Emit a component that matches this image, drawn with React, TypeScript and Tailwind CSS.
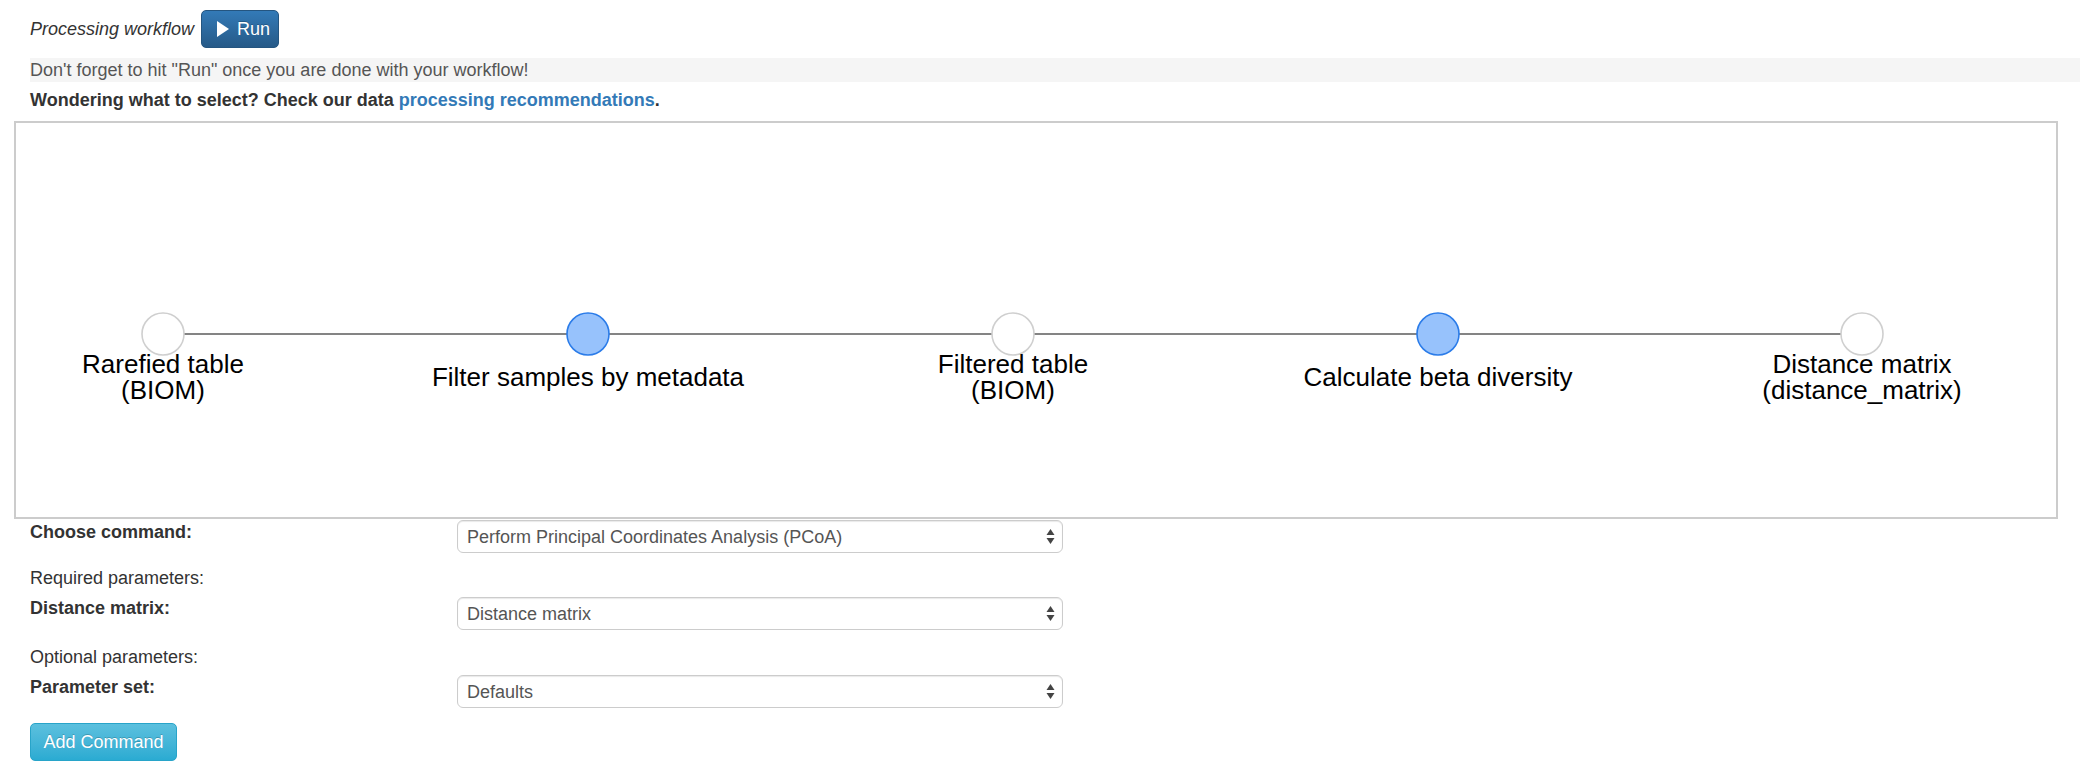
import React from "react";

type Node = {
  cx: number;
  kind: "data" | "fn";
  lines: string[];
  pos: string;
};

const nodes: Node[] = [
  { cx: 147, kind: "data", lines: ["Rarefied table", "(BIOM)"], pos: "left-[147px]" },
  { cx: 572, kind: "fn", lines: ["Filter samples by metadata"], pos: "left-[572px]" },
  { cx: 997, kind: "data", lines: ["Filtered table", "(BIOM)"], pos: "left-[997px]" },
  { cx: 1422, kind: "fn", lines: ["Calculate beta diversity"], pos: "left-[1422px]" },
  { cx: 1846, kind: "data", lines: ["Distance matrix", "(distance_matrix)"], pos: "left-[1846px]" },
];

function SelectBox({ value }: { value: string }) {
  return (
    <div className="flex h-[33px] w-[606px] items-center justify-between rounded-[6px] border border-[#ccc] bg-white pl-[9px] pr-[7px] text-[#555] shadow-[inset_0_1px_1px_rgba(0,0,0,0.09)]">
      <span>{value}</span>
      {/* native-looking up/down arrows */}
      <svg width="9" height="17" viewBox="0 0 9 17">
        <path d="M4.5 1 L8.5 7 L0.5 7 Z" fill="#444" />
        <path d="M4.5 16 L8.5 10 L0.5 10 Z" fill="#444" />
      </svg>
    </div>
  );
}

export default function App() {
  return (
    <div className="min-h-screen bg-white font-['Liberation_Sans',Arial,sans-serif] text-[18px] leading-[26px] text-[#333]">
      {/* Header */}
      <div className="flex items-center pl-[30px] pt-[10px]">
        <span className="italic">Processing workflow</span>
        <button className="ml-[7px] flex h-[38px] w-[78px] items-center rounded-[5px] border border-[#245580] bg-gradient-to-b from-[#337ab7] to-[#265a88] pl-[15px] text-white [text-shadow:0_-1px_0_rgba(0,0,0,0.2)]">
          <svg width="12" height="16" viewBox="0 0 12 16" className="mr-[8px]">
            <path d="M0 0 L12 8 L0 16 Z" fill="#fff" />
          </svg>
          <span>Run</span>
        </button>
      </div>

      <div className="ml-[30px] mt-[10px] h-[24px] bg-[#f5f5f5] leading-[24px] text-[#555]">
        Don't forget to hit "Run" once you are done with your workflow!
      </div>

      <div className="mt-[5px] pl-[30px] font-bold">
        Wondering what to select? Check our data <a className="text-[#337ab7]">processing recommendations</a>.
      </div>

      {/* Workflow graph */}
      <div className="relative ml-[14px] mt-[8px] h-[398px] w-[2044px] border-2 border-[#ccc] bg-white">
        <svg className="absolute left-0 top-0" width="2040" height="394">
          <line x1="147" y1="211" x2="1846" y2="211" stroke="#848484" strokeWidth="2" />
          {nodes.map((n) => (
            <circle
              key={n.cx}
              cx={n.cx}
              cy="211"
              r="21"
              fill={n.kind === "fn" ? "#97c2fc" : "#fff"}
              stroke={n.kind === "fn" ? "#2b7ce9" : "#cfcfcf"}
              strokeWidth="1.6"
            />
          ))}
        </svg>
        {nodes.map((n) => (
          <div
            key={n.cx}
            className={`absolute top-[254px] ${n.pos} -translate-x-1/2 -translate-y-1/2 whitespace-nowrap text-center text-[26px] leading-[26px] text-black`}
          >
            {n.lines.map((l) => (
              <div key={l}>{l}</div>
            ))}
          </div>
        ))}
      </div>

      {/* Command form */}
      <div className="pl-[30px]">
        <div className="flex items-start">
          <div className="w-[427px] font-bold">Choose command:</div>
          <div className="mt-[1px]">
            <SelectBox value="Perform Principal Coordinates Analysis (PCoA)" />
          </div>
        </div>
        <div className="mt-[12px]">Required parameters:</div>
        <div className="mt-[4px] flex items-start">
          <div className="w-[427px] font-bold">Distance matrix:</div>
          <div className="mt-[2px]">
            <SelectBox value="Distance matrix" />
          </div>
        </div>
        <div className="mt-[14px]">Optional parameters:</div>
        <div className="mt-[4px] flex items-start">
          <div className="w-[427px] font-bold">Parameter set:</div>
          <div className="mt-[1px]">
            <SelectBox value="Defaults" />
          </div>
        </div>
        <button className="mt-[15px] h-[38px] w-[147px] rounded-[5px] border border-[#28a4c9] bg-gradient-to-b from-[#5bc0de] to-[#2aabd2] text-center text-white [text-shadow:0_-1px_0_rgba(0,0,0,0.2)]">
          Add Command
        </button>
      </div>
    </div>
  );
}
